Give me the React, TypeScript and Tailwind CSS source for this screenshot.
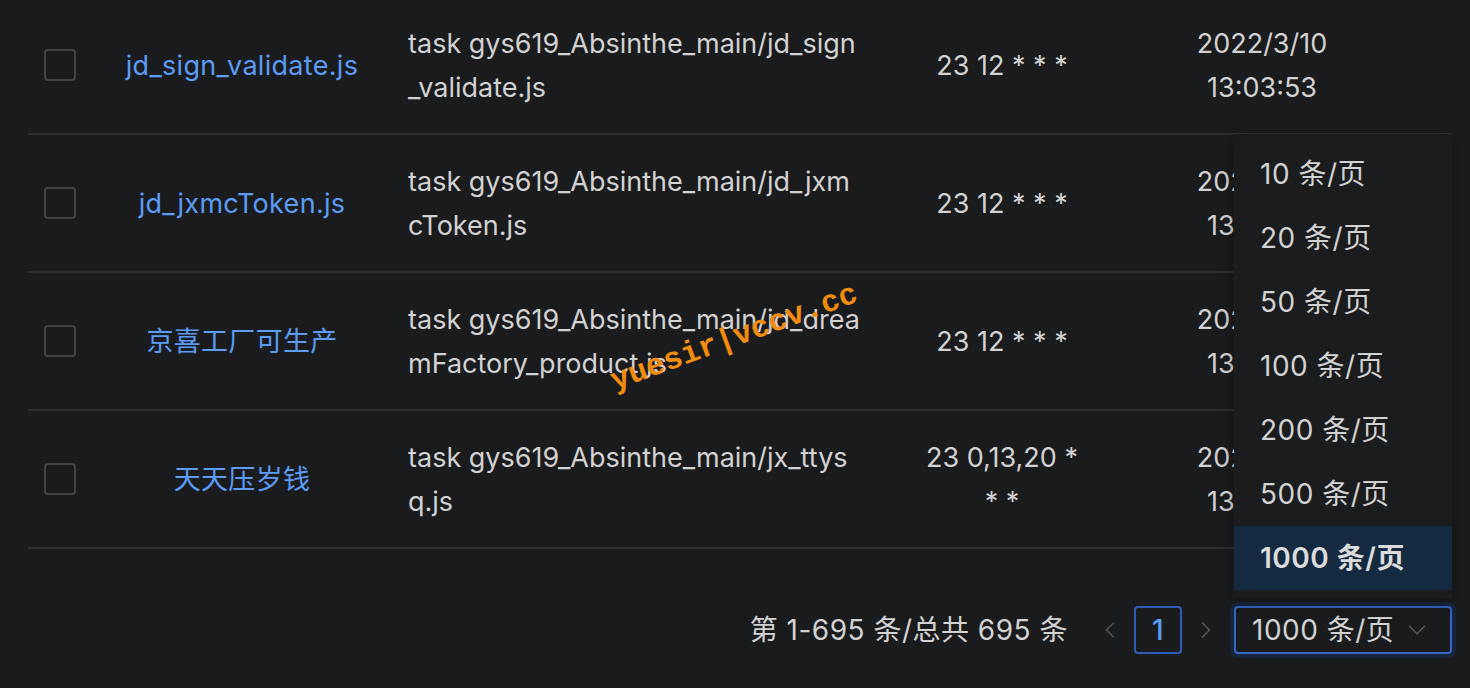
import { ChevronDown, ChevronLeft, ChevronRight } from 'lucide-react'

const font = { fontFamily: '"Inter", "Noto Sans CJK SC", sans-serif' }

const rows = [
  {
    name: 'jd_sign_validate.js',
    command: 'task gys619_Absinthe_main/jd_sign_validate.js',
    cron: '23 12 * * *',
  },
  {
    name: 'jd_jxmcToken.js',
    command: 'task gys619_Absinthe_main/jd_jxmcToken.js',
    cron: '23 12 * * *',
  },
  {
    name: '京喜工厂可生产',
    command: 'task gys619_Absinthe_main/jd_dreamFactory_product.js',
    cron: '23 12 * * *',
  },
  {
    name: '天天压岁钱',
    command: 'task gys619_Absinthe_main/jx_ttysq.js',
    cron: '23 0,13,20 * * *',
  },
]

const sizes = ['10 条/页', '20 条/页', '50 条/页', '100 条/页', '200 条/页', '500 条/页', '1000 条/页']

function Checkbox() {
  return <div className="h-[32px] w-[32px] rounded-[4px] border-2 border-[#434343]" />
}

export default function App() {
  return (
    <div
      className="relative h-[688px] w-[1470px] overflow-hidden bg-[#1a1b1d] text-[27px] leading-[44px] text-[#d2d2d2]"
      style={font}
    >
      {/* table body */}
      <div className="mx-[28px] mt-[-3px] w-[1424px]">
        {rows.map((row, i) => (
          <div key={i} className="flex h-[138px] items-center border-b-2 border-[#303030]">
            <div className="w-[64px] pl-[16px]">
              <Checkbox />
            </div>
            <div className="w-[300px] pt-[2px] text-center text-[#5b9cf6] tracking-[0.3px]">{row.name}</div>
            <div className="w-[496px] pl-[16px] pr-[28px] pt-[2px] break-all">{row.command}</div>
            <div className="w-[228px] px-[31px] pt-[2px] text-center">{row.cron}</div>
            <div className="w-[292px] px-[50px] pt-[2px] text-center">2022/3/10 13:03:53</div>
            <div className="flex-1" />
          </div>
        ))}
      </div>

      {/* pagination */}
      <div className="mr-[18px] mt-[57px] flex items-center justify-end text-[28px] tracking-[0.5px]">
        <span>第 1-695 条/总共 695 条</span>
        <div className="ml-[18px] flex h-[48px] w-[48px] items-center justify-center text-[#4f4f4f]">
          <ChevronLeft size={28} strokeWidth={1.5} />
        </div>
        <div className="flex h-[48px] w-[48px] items-center justify-center rounded-[4px] border-2 border-[#2f5cb8] font-medium text-[#5b9cf6]">
          1
        </div>
        <div className="flex h-[48px] w-[48px] items-center justify-center text-[#555555]">
          <ChevronRight size={28} strokeWidth={1.5} />
        </div>
        <div className="ml-[4px] flex h-[48px] w-[218px] items-center justify-between rounded-[4px] border-2 border-[#3866c8] pl-[16px] pr-[18px] shadow-[0_0_0_4px_#18263d]">
          <span>1000 条/页</span>
          <ChevronDown size={30} strokeWidth={1.2} className="text-[#5a5a5a]" />
        </div>
      </div>

      {/* page size dropdown */}
      <div className="absolute left-[1234px] top-[134px] w-[218px] bg-[#1b1c1e] py-[8px] text-[28px] tracking-[0.5px] shadow-[0_6px_16px_rgba(0,0,0,0.3)]">
        {sizes.map((s) => (
          <div
            key={s}
            className={
              s === '1000 条/页'
                ? 'flex h-[64px] items-center bg-[#132a41] pl-[26px] font-semibold text-[#dcdcdc]'
                : 'flex h-[64px] items-center pl-[26px]'
            }
          >
            {s}
          </div>
        ))}
      </div>

      {/* watermark */}
      <div
        className="pointer-events-none absolute left-[604px] top-[322px] rotate-[-20deg] text-[31px] font-bold leading-none text-[#f28c0c]"
        style={{ fontFamily: '"Liberation Mono", monospace' }}
      >
        yuesir|vccv.cc
      </div>
    </div>
  )
}
